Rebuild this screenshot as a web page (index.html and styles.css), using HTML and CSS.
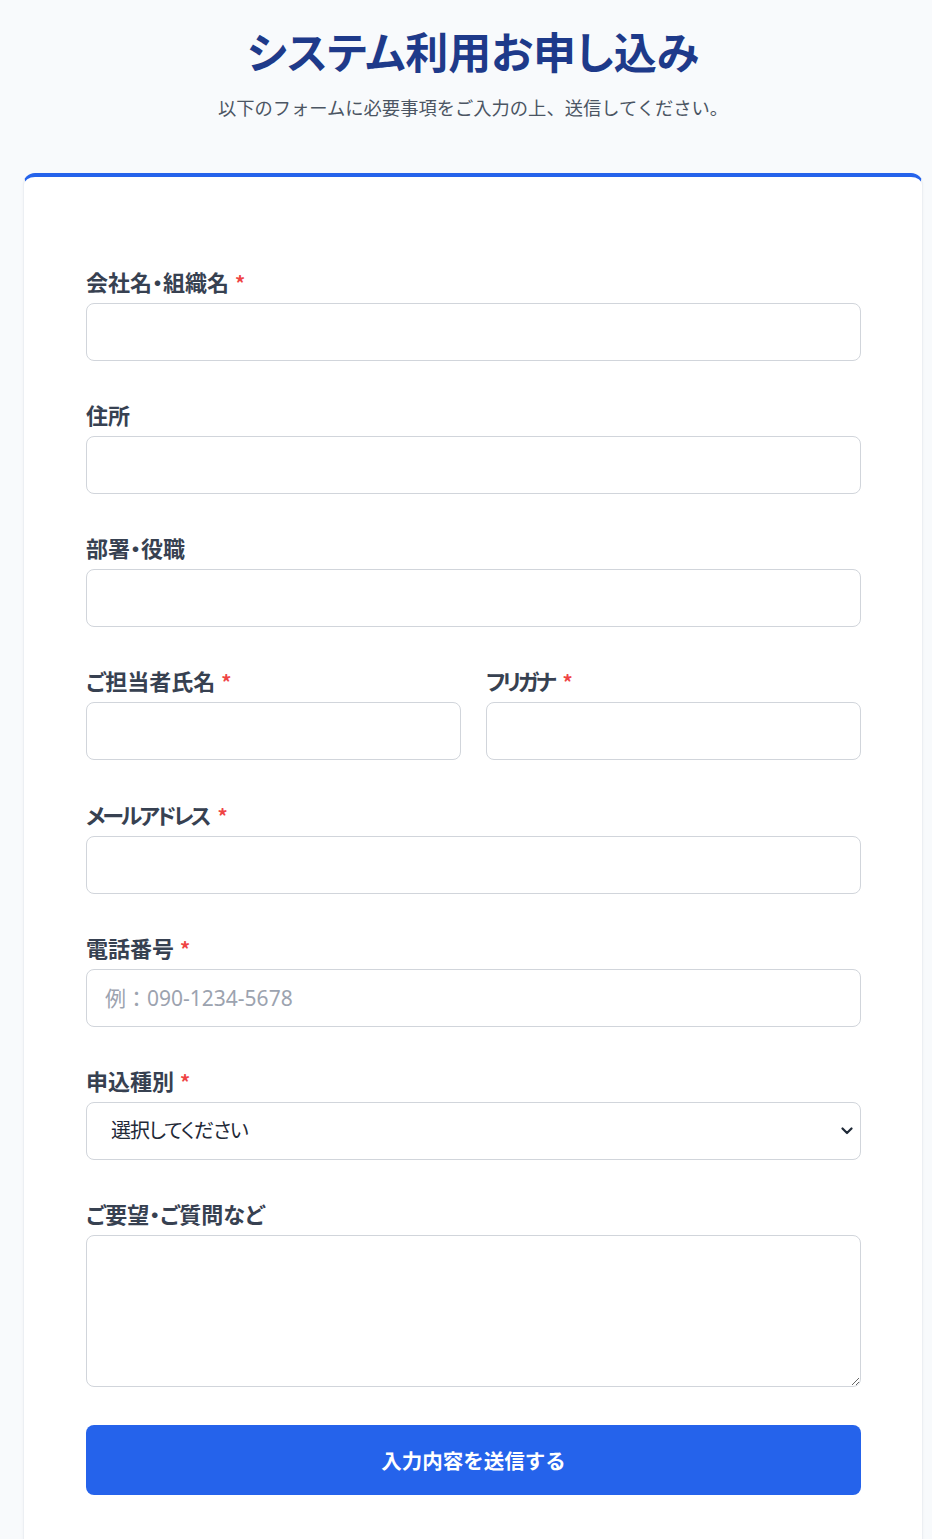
FILE: index.html
```html
<!DOCTYPE html>
<html lang="ja">
<head>
<meta charset="utf-8">
<title>システム利用お申し込み</title>
<link rel="stylesheet" href="styles.css">
</head>
<body>
<main class="page">
  <header class="hero">
    <h1 class="hero-title">システム利用お申し込み</h1>
    <p class="hero-sub">以下のフォームに必要事項をご入力の上、送信してください。</p>
  </header>
  <section class="card">
    <form class="form">
      <div class="field">
        <label class="label">会社名・組織名<span class="req">*</span></label>
        <input class="input" type="text">
      </div>
      <div class="field">
        <label class="label">住所</label>
        <input class="input" type="text">
      </div>
      <div class="field">
        <label class="label">部署・役職</label>
        <input class="input" type="text">
      </div>
      <div class="row">
        <div class="field">
          <label class="label">ご担当者氏名<span class="req">*</span></label>
          <input class="input" type="text">
        </div>
        <div class="field">
          <label class="label"><span class="kana">フリガナ</span><span class="req">*</span></label>
          <input class="input" type="text">
        </div>
      </div>
      <div class="field">
        <label class="label"><span class="kana">メールアドレス</span><span class="req">*</span></label>
        <input class="input" type="email">
      </div>
      <div class="field">
        <label class="label">電話番号<span class="req">*</span></label>
        <input class="input" type="tel" placeholder="例：090-1234-5678">
      </div>
      <div class="field">
        <label class="label">申込種別<span class="req">*</span></label>
        <div class="select-wrap">
          <select class="select">
            <option>選択してください</option>
          </select>
          <svg class="chevron" width="12" height="8" viewBox="0 0 12 8"><path d="M1.5 1.5 L6 6 L10.5 1.5" fill="none" stroke="#1f2937" stroke-width="2.2" stroke-linecap="round" stroke-linejoin="round"/></svg>
        </div>
      </div>
      <div class="field">
        <label class="label">ご要望・ご質問など</label>
        <textarea class="textarea"></textarea>
      </div>
      <button class="submit" type="button">入力内容を送信する</button>
    </form>
  </section>
</main>
</body>
</html>
```
FILE: styles.css
```css
* { box-sizing: border-box; }
html, body { margin: 0; padding: 0; }
body {
  background: #f8fafc;
  font-family: "Noto Sans CJK JP", "Noto Sans", sans-serif;
  color: #1f2937;
}
.page {
  width: 923px;
  padding: 22px 0 0 23px;
}
.hero { text-align: center; }
.hero-title {
  margin: 0;
  font-size: 43px;
  line-height: 56px;
  font-weight: 700;
  color: #1e3a8a;
  font-feature-settings: "palt";
}
.hero-sub {
  margin: 15px 0 0;
  font-size: 18.3px;
  line-height: 28px;
  color: #4b5563;
}
.card {
  margin-top: 52px;
  background: #ffffff;
  border: 1px solid #eceff3;
  border-top: 4px solid #2563eb;
  border-radius: 12px;
  padding: 90px 61px 64px 62px;
  box-shadow: 0 1px 3px rgba(15, 23, 42, 0.04);
}
.form {
  display: flex;
  flex-direction: column;
  gap: 39.15px;
}
.row {
  display: grid;
  grid-template-columns: 1fr 1fr;
  gap: 25px;
}
.field {
  display: flex;
  flex-direction: column;
}
.label {
  display: block;
  height: 28px;
  font-size: 22px;
  line-height: 28px;
  font-weight: 700;
  color: #374151;
  margin-bottom: 8px;
  font-feature-settings: "palt";
  white-space: nowrap;
}
.kana {
  letter-spacing: -3px;
  padding-right: 3px;
}
.req {
  color: #ef4444;
  margin-left: 6px;
  font-size: 20px;
  line-height: 1;
  letter-spacing: 0;
}
.input, .select, .textarea {
  width: 100%;
  height: 58px;
  border: 1px solid #d1d5db;
  border-radius: 8px;
  background: #ffffff;
  font-family: "Noto Sans", "Noto Sans CJK JP", sans-serif;
  font-size: 21px;
  color: #1f2937;
  padding: 0 18px;
  outline: none;
}
.input::placeholder { color: #9ca3af; }
.select-wrap { position: relative; }
.select {
  appearance: none;
  -webkit-appearance: none;
  padding-left: 24px;
  font-size: 20px;
  color: #1f2937;
  font-feature-settings: "palt";
  letter-spacing: -1px;
}
.chevron {
  position: absolute;
  right: 8px;
  top: 25px;
  pointer-events: none;
}
.textarea {
  height: 152px;
  padding: 14px 18px;
  resize: vertical;
}
.submit {
  margin-top: -1px;
  height: 70px;
  border: none;
  border-radius: 8px;
  background: #2563eb;
  color: #ffffff;
  font-family: "Noto Sans CJK JP", "Noto Sans", sans-serif;
  font-size: 20.5px;
  font-weight: 700;
  cursor: pointer;
}
```
